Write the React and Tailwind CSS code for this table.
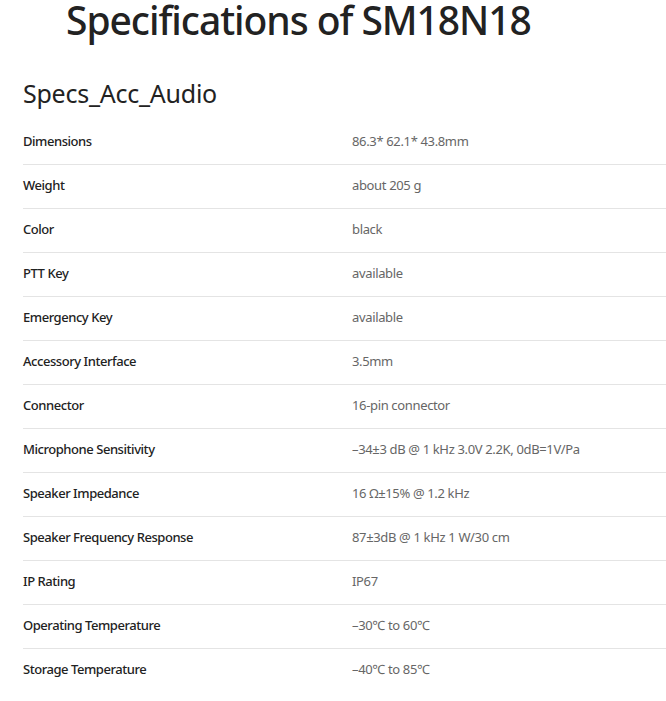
import React from "react";

const specs = [
  ["Dimensions", "86.3* 62.1* 43.8mm"],
  ["Weight", "about 205 g"],
  ["Color", "black"],
  ["PTT Key", "available"],
  ["Emergency Key", "available"],
  ["Accessory Interface", "3.5mm"],
  ["Connector", "16-pin connector"],
  ["Microphone Sensitivity", "–34±3 dB @ 1 kHz 3.0V 2.2K, 0dB=1V/Pa"],
  ["Speaker Impedance", "16 Ω±15% @ 1.2 kHz"],
  ["Speaker Frequency Response", "87±3dB @ 1 kHz 1 W/30 cm"],
  ["IP Rating", "IP67"],
  ["Operating Temperature", "–30℃ to 60℃"],
  ["Storage Temperature", "–40℃ to 85℃"],
];

const App = () => {
  return (
    <div className="w-[666px] h-[701px] bg-white overflow-hidden font-['Noto_Sans',sans-serif]">
      <h1 className="pl-[66px] pt-[1px] text-[39px] leading-[38px] font-medium text-[#222] tracking-[-1.05px]">
        Specifications of SM18N18
      </h1>

      <h2 className="mt-[39px] pl-[23px] text-[25px] leading-[30px] text-[#222] tracking-[-0.25px]">
        Specs_Acc_Audio
      </h2>

      {/* spec table */}
      <div className="mt-[13px] ml-[23px]">
        {specs.map(([label, value], index) => (
          <div
            key={index}
            className={`flex h-[44px] pt-[11px] text-[13px] leading-[18px] ${
              index < specs.length - 1 ? "border-b border-[#e4e4e4]" : ""
            }`}
          >
            <span className="w-[329px] shrink-0 font-medium text-[#222] tracking-[-0.45px]">
              {label}
            </span>
            <span className="text-[#666] tracking-[-0.35px]">{value}</span>
          </div>
        ))}
      </div>
    </div>
  );
};

export default App;
